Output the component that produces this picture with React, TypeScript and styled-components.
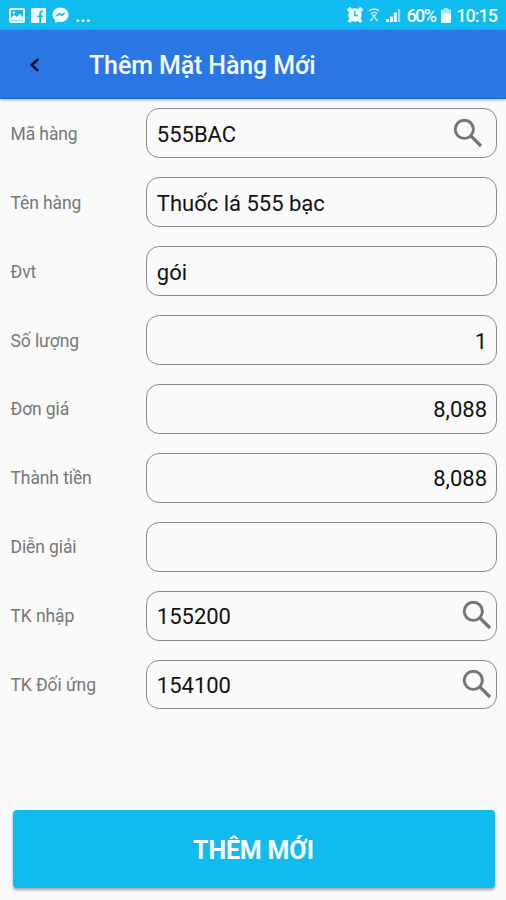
import React from 'react';
import styled, { createGlobalStyle } from 'styled-components';

const GlobalStyle = createGlobalStyle`
  * { box-sizing: border-box; }
  body { margin: 0; background: #fafafa; font-family: Roboto, "Noto Sans", sans-serif; }
`;

const Screen = styled.div`
  width: 506px;
  height: 900px;
  display: flex;
  flex-direction: column;
  background: #fafafa;
  overflow: hidden;
`;

const StatusBar = styled.div`
  height: 30px;
  flex: none;
  display: flex;
  align-items: center;
  justify-content: space-between;
  padding: 0 9px;
  background: #10bbee;
  color: #eefaff;
`;

const StatusGroup = styled.div<{ $gap: number }>`
  display: flex;
  align-items: center;
  gap: ${(p) => p.$gap}px;
  svg { display: block; flex: none; }
`;

const StatusText = styled.span<{ $size?: number; $spacing?: number; $weight?: number }>`
  font-size: ${(p) => p.$size ?? 18}px;
  letter-spacing: ${(p) => p.$spacing ?? 0}px;
  font-weight: ${(p) => p.$weight ?? 500};
  line-height: 30px;
  padding-top: 2px;
`;

const AppBar = styled.header`
  height: 69px;
  flex: none;
  display: flex;
  align-items: center;
  background: #2a77e4;
  border-bottom: 1px solid #1c66cf;
  box-shadow: 0 1px 3px rgba(0, 0, 0, 0.3);
  padding-left: 24px;
`;

const BackButton = styled.button`
  width: 22px;
  height: 32px;
  padding: 0;
  margin-top: 1px;
  border: 0;
  background: none;
  display: flex;
  align-items: center;
  justify-content: center;
`;

const Title = styled.h1`
  margin: 4px 0 0 43px;
  font-size: 25px;
  letter-spacing: -0.12px;
  line-height: 32px;
  font-weight: 500;
  color: #f4f9ff;
`;

const Form = styled.form`
  flex: 1;
  display: flex;
  flex-direction: column;
  padding: 9.45px 9px 12px 10.5px;
`;

const Row = styled.label`
  display: grid;
  grid-template-columns: 135.8px 1fr;
  align-items: center;
  height: 49.5px;
  margin-bottom: 19.45px;
`;

const Label = styled.span`
  font-size: 17.5px;
  letter-spacing: -0.1px;
  line-height: 24px;
  padding-top: 1px;
  color: #777;
`;

const Field = styled.span<{ $end?: boolean; $iconInset: number }>`
  height: 49.5px;
  display: flex;
  align-items: center;
  justify-content: ${(p) => (p.$end ? 'flex-end' : 'space-between')};
  border: 1px solid #8b8b8b;
  border-radius: 13px;
  padding: 0 ${(p) => p.$iconInset}px 0 9.5px;
  svg { display: block; margin-top: -1px; }
`;

const Value = styled.span`
  font-size: 22px;
  line-height: 30px;
  padding-top: 3px;
  color: #111;
`;

const Submit = styled.button`
  margin: auto 2.5px 0 2px;
  height: 78px;
  padding: 3px 0 0;
  border: 0;
  border-radius: 4px;
  background: #10bbee;
  box-shadow: 0 2px 3px rgba(0, 0, 0, 0.35);
  color: #f6fdff;
  font: 700 25px/32px Roboto, "Noto Sans", sans-serif;
  letter-spacing: -0.15px;
`;

const SearchIcon = () => (
  <svg width="30" height="30" viewBox="0 0 30 30" fill="none" stroke="#757575">
    <circle cx="11.3" cy="11.3" r="9.1" strokeWidth="2.9" />
    <path d="M17.8 17.8 28 28" strokeWidth="3.3" />
  </svg>
);

const PictureIcon = () => (
  <svg width="16" height="15" viewBox="0 0 16 15">
    <rect x="1" y="1" width="14" height="13" rx="1" fill="none" stroke="#f0fbff" strokeWidth="2" />
    <path d="M2 12.5V9.5l3.5-2.5 2.5 2 3-3.5L14 10v2.5z" fill="#f0fbff" />
    <circle cx="4.8" cy="4.6" r="1.2" fill="#f0fbff" />
  </svg>
);

const FacebookIcon = () => (
  <svg width="15" height="15" viewBox="0 0 15 15">
    <rect width="15" height="15" rx="1" fill="#f0fbff" />
    <path d="M9.2 15V8.8M6.3 8.4h5.5M9.2 9V5.2q0-2 2.8-1.8" fill="none" stroke="#10bbee" strokeWidth="1.9" />
  </svg>
);

const MessengerIcon = () => (
  <svg width="17" height="17" viewBox="0 0 17 17">
    <path d="M8.5.5C4 .5.5 3.6.5 7.7c0 2.3 1.1 4.3 2.8 5.6v3l2.8-1.6c.8.2 1.6.3 2.4.3 4.5 0 8-3.2 8-7.3S13 .5 8.5.5z" fill="#f0fbff" />
    <path d="M4.5 9.2l2.9-2.7 2 2 3.1-2.1" fill="none" stroke="#10bbee" strokeWidth="1.6" />
  </svg>
);

const AlarmIcon = () => (
  <svg width="16" height="16" viewBox="0 0 16 16">
    <path d="M1 4 4 1M15 4 12 1M4 12.500 1.800 15M12 12.500l2.200 2.500" stroke="#f0fbff" strokeWidth="3.4" />
    <circle cx="8" cy="8" r="6.7" fill="#f0fbff" />
    <path d="M7.8 4.2v4.3h3" fill="none" stroke="#10bbee" strokeWidth="1.5" />
  </svg>
);

const WifiIcon = () => (
  <svg width="12" height="16" viewBox="0 0 13 16" fill="none" stroke="#c7f0fc" strokeWidth="1.5">
    <path d="M1 3.5q5.5-4 11 0M3 6.5q3.5-2.6 7 0" />
    <path d="M3.800 7.500h5.400l-2.700 4z" fill="#c7f0fc" stroke="none" />
    <path d="M2.5 14.5 5.500 11M10.5 14.5 7.500 11" />
  </svg>
);

const SignalIcon = () => (
  <svg width="15" height="14" viewBox="0 0 15 14">
    <path d="M0 11h3v3H0zM4 8.5h3V14H4zM7.8 4.5h3V14h-3z" fill="#f0fbff" />
    <path d="M12 1h2.2v13H12z" fill="#8edff7" />
  </svg>
);

const BatteryIcon = () => (
  <svg width="10" height="15" viewBox="0 0 10 15">
    <path d="M3 0h4v1.5h3V6H0V1.5h3z" fill="#a5e5f8" />
    <rect y="5.5" width="10" height="9.5" rx="1" fill="#f0fbff" />
  </svg>
);

type Item = { label: string; value: string; end?: boolean; search?: number };

const items: Item[] = [
  { label: 'Mã hàng', value: '555BAC', search: 13.5 },
  { label: 'Tên hàng', value: 'Thuốc lá 555 bạc' },
  { label: 'Đvt', value: 'gói' },
  { label: 'Số lượng', value: '1', end: true },
  { label: 'Đơn giá', value: '8,088', end: true },
  { label: 'Thành tiền', value: '8,088', end: true },
  { label: 'Diễn giải', value: '' },
  { label: 'TK nhập', value: '155200', search: 4.5 },
  { label: 'TK Đối ứng', value: '154100', search: 4.5 },
];

export default function App() {
  return (
    <Screen>
      <GlobalStyle />
      <StatusBar>
        <StatusGroup $gap={6}>
          <PictureIcon />
          <FacebookIcon />
          <MessengerIcon />
          <StatusText $size={19} $weight={700} $spacing={-0.3}>...</StatusText>
        </StatusGroup>
        <StatusGroup $gap={5.5}>
          <AlarmIcon />
          <WifiIcon />
          <SignalIcon />
          <StatusText $spacing={-1.6}>60%</StatusText>
          <BatteryIcon />
          <StatusText $spacing={-1}>10:15</StatusText>
        </StatusGroup>
      </StatusBar>
      <AppBar>
        <BackButton type="button">
          <svg width="12" height="16" viewBox="0 0 12 16" fill="none" stroke="#06122a" strokeWidth="2.6">
            <path d="M9.2 2 2.7 8l6.5 6" />
          </svg>
        </BackButton>
        <Title>Thêm Mặt Hàng Mới</Title>
      </AppBar>
      <Form>
        {items.map((item) => (
          <Row key={item.label}>
            <Label>{item.label}</Label>
            <Field $end={item.end} $iconInset={item.search ?? 9}>
              <Value>{item.value}</Value>
              {item.search !== undefined && <SearchIcon />}
            </Field>
          </Row>
        ))}
        <Submit type="button">THÊM MỚI</Submit>
      </Form>
    </Screen>
  );
}
